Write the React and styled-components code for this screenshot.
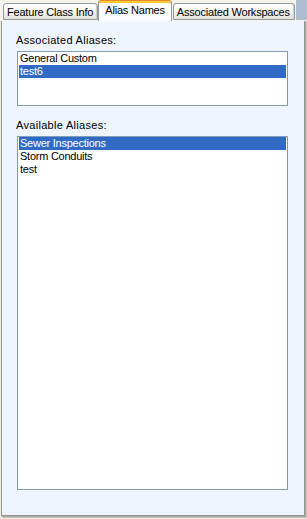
import React from 'react'
import styled, {createGlobalStyle} from "styled-components"

const GlobalStyle = createGlobalStyle`
    html, body {
        margin: 0;
        padding: 0;
        background: #ECE9D8;
    }
    body {
        font-family: "Liberation Sans", Arial, sans-serif;
        font-size: 11px;
        color: #000;
    }
`;

const tabs = ["Feature Class Info", "Alias Names", "Associated Workspaces"];

const associated = [
    {name: "General Custom"},
    {name: "test6", selected: true},
];

const available = [
    {name: "Sewer Inspections", selected: true},
    {name: "Storm Conduits"},
    {name: "test"},
];

export default function App() {
    return (
        <>
            <GlobalStyle />
            <Window>
                <TabStrip>
                    {tabs.map((t) => (
                        <Tab key={t} $active={t === "Alias Names"}>{t}</Tab>
                    ))}
                    <StripFiller />
                </TabStrip>
                <Panel>
                    <Label>Associated Aliases:</Label>
                    <ListBox $height={55}>
                        {associated.map((a) => (
                            <Item key={a.name} $selected={a.selected}>{a.name}</Item>
                        ))}
                    </ListBox>
                    <Label $top={13}>Available Aliases:</Label>
                    <ListBox $height={354}>
                        {available.map((a) => (
                            <Item key={a.name} $selected={a.selected}>{a.name}</Item>
                        ))}
                    </ListBox>
                </Panel>
            </Window>
        </>
    )
}

const Window = styled.div`
    width: 307px;
    height: 519px;
    background: #ECE9D8;
    display: flex;
    flex-direction: column;
`;

const TabStrip = styled.div`
    height: 21px;
    display: flex;
    align-items: flex-end;
    padding-left: 3px;
    position: relative;
    z-index: 1;
    margin-bottom: -1px;
    background: #F4F3EE;
`;

const StripFiller = styled.div`
    flex: 1;
    align-self: stretch;
    margin-left: 1px;
    margin-bottom: 1px;
    background: #AFBDD1;
`;

const Tab = styled.div`
    box-sizing: border-box;
    height: ${p => p.$active ? "21px" : "17px"};
    margin: ${p => p.$active ? "0 1px 0 0" : "0 0 1px 0"};
    padding: ${p => p.$active ? "3px 6px 0 6px" : "2px 4px 0 3px"};
    line-height: 13px;
    letter-spacing: -0.2px;
    white-space: nowrap;
    border: 1px solid #919B9C;
    border-bottom: ${p => p.$active ? "none" : "1px solid #919B9C"};
    border-radius: 3px 3px 0 0;
    background: ${p => p.$active
        ? "#FCFCFE"
        : "linear-gradient(#FFFFFF, #F3F3EF 60%, #E2E1DA)"};
    box-shadow: ${p => p.$active ? "inset 0 2px 0 #FFC83C" : "inset -1px 0 0 #D0CFC8"};
    border-top-color: ${p => p.$active ? "#E68B2C" : "#919B9C"};
    position: relative;
    z-index: ${p => p.$active ? 2 : 1};
`;

const Panel = styled.div`
    box-sizing: border-box;
    width: 304px;
    height: 496px;
    margin-left: 1px;
    border: 1px solid #919B9C;
    background: #EEF5FE;
    box-shadow: 1px 1px 0 #A7A69C, 2px 2px 0 #C9C7BA;
    padding: 13px 0 0 14px;
    display: flex;
    flex-direction: column;
    align-items: flex-start;
`;

const Label = styled.div`
    line-height: 13px;
    letter-spacing: 0.3px;
    margin-top: ${p => p.$top || 0}px;
    margin-bottom: 4px;
`;

const ListBox = styled.div`
    box-sizing: border-box;
    width: 271px;
    height: ${p => p.$height}px;
    margin-left: 1px;
    border: 1px solid #7F9DB9;
    background: #FFFFFF;
    padding: 0 1px;
`;

const Item = styled.div`
    height: 13px;
    line-height: 13px;
    padding-left: 1px;
    letter-spacing: -0.25px;
    white-space: nowrap;
    background: ${p => p.$selected ? "#316AC5" : "transparent"};
    color: ${p => p.$selected ? "#FFFFFF" : "#000000"};
`;
